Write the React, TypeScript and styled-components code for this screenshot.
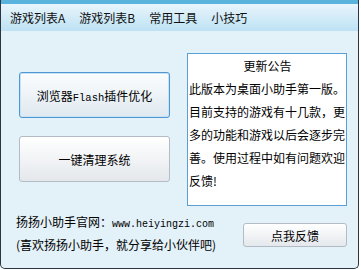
import styled, { createGlobalStyle } from "styled-components";

const GlobalStyle = createGlobalStyle`
  html, body {
    margin: 0;
    padding: 0;
    background: #ffffff;
  }
  body {
    font-family: "Noto Sans CJK SC", "Liberation Sans", sans-serif;
    font-size: 12px;
    color: #000;
  }
`;

const Window = styled.div`
  width: 359px;
  height: 269px;
  box-sizing: border-box;
  border: 1px solid #2b3440;
  border-top: none;
  border-radius: 0 0 5px 5px;
  background: #e3f1f9;
  display: flex;
  flex-direction: column;
  overflow: hidden;
`;

const TopStrip = styled.div`
  height: 4px;
  background: #5ab3dc;
`;

const MenuBar = styled.div`
  height: 27px;
  display: flex;
  align-items: center;
  gap: 14px;
  padding-left: 9px;
  background: linear-gradient(#e8f5fc, #bde2f4);
`;

const MenuItem = styled.span`
  font-size: 12px;
  line-height: 14px;
  color: #111;
`;

const MainRow = styled.div`
  display: flex;
  margin-top: 22px;
`;

const ButtonColumn = styled.div`
  display: flex;
  flex-direction: column;
  gap: 18px;
  margin-left: 18px;
  padding-top: 19px;
  width: 151px;
`;

const BigButton = styled.button<{ $active?: boolean }>`
  height: 46px;
  width: 151px;
  box-sizing: border-box;
  border: 1px solid ${(p) => (p.$active ? "#4c97d4" : "#b3bcc4")};
  border-radius: 3px;
  background: ${(p) =>
    p.$active
      ? "linear-gradient(#fbfdfe, #dfe9f0)"
      : "linear-gradient(#ffffff, #e4e8ec)"};
  box-shadow: ${(p) => (p.$active ? "inset 0 0 0 1px #c9e3f5" : "none")};
  font-family: "Noto Sans CJK SC", sans-serif;
  font-size: 12px;
  color: #000;
  padding: 0;
`;

const Mono = styled.span`
  font-family: "Liberation Mono", monospace;
  font-size: 10.5px;
`;

const Notice = styled.div`
  margin-left: 17px;
  width: 160px;
  height: 153px;
  box-sizing: border-box;
  border: 1px solid #5aa0d6;
  background: #ffffff;
  padding-left: 1px;
`;

const NoticeLine = styled.div<{ $center?: boolean }>`
  height: 23px;
  line-height: 23px;
  font-size: 12px;
  white-space: nowrap;
  text-align: ${(p) => (p.$center ? "center" : "left")};
`;

const Footer = styled.div`
  display: flex;
  justify-content: space-between;
  align-items: flex-start;
  margin-top: 4px;
`;

const FooterText = styled.div`
  padding-left: 15px;
`;

const FooterLine = styled.div`
  height: 23px;
  line-height: 23px;
  font-size: 12px;
  white-space: nowrap;
`;

const Url = styled.span`
  font-family: "Liberation Mono", monospace;
  font-size: 10px;
`;

const FeedbackButton = styled.button`
  margin-top: 13px;
  margin-right: 11px;
  width: 104px;
  height: 24px;
  box-sizing: border-box;
  border: 1px solid #b3bcc4;
  border-radius: 3px;
  background: linear-gradient(#ffffff, #e4e8ec);
  font-family: "Noto Sans CJK SC", sans-serif;
  font-size: 12px;
  color: #000;
  padding: 0;
`;

const notice = [
  "此版本为桌面小助手第一版。",
  "目前支持的游戏有十几款，更",
  "多的功能和游戏以后会逐步完",
  "善。使用过程中如有问题欢迎",
  "反馈!",
];

function App() {
  return (
    <>
      <GlobalStyle />
      <Window>
        <TopStrip />
        <MenuBar>
          <MenuItem>游戏列表A</MenuItem>
          <MenuItem>游戏列表B</MenuItem>
          <MenuItem>常用工具</MenuItem>
          <MenuItem>小技巧</MenuItem>
        </MenuBar>
        <MainRow>
          <ButtonColumn>
            <BigButton $active>
              浏览器<Mono>Flash</Mono>插件优化
            </BigButton>
            <BigButton>一键清理系统</BigButton>
          </ButtonColumn>
          <Notice>
            <NoticeLine $center>更新公告</NoticeLine>
            {notice.map((line) => (
              <NoticeLine key={line}>{line}</NoticeLine>
            ))}
          </Notice>
        </MainRow>
        <Footer>
          <FooterText>
            <FooterLine>
              扬扬小助手官网：<Url>www.heiyingzi.com</Url>
            </FooterLine>
            <FooterLine>(喜欢扬扬小助手，就分享给小伙伴吧)</FooterLine>
          </FooterText>
          <FeedbackButton>点我反馈</FeedbackButton>
        </Footer>
      </Window>
    </>
  );
}

export default App;
